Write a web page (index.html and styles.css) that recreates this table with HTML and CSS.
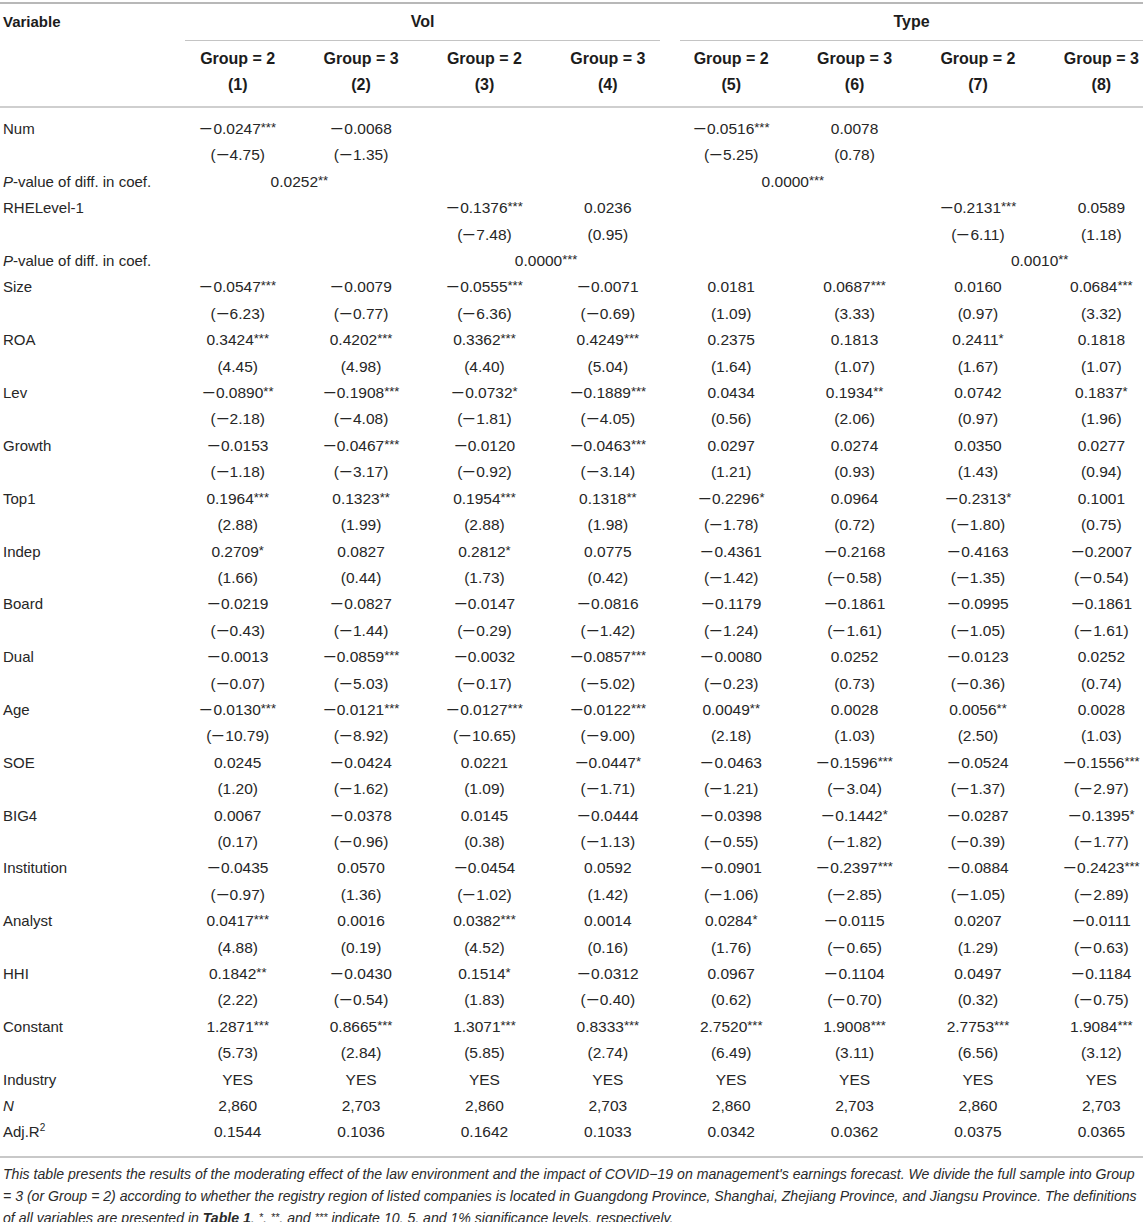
FILE: index.html
```html
<!DOCTYPE html>
<html>
<head>
<meta charset="utf-8">
<link rel="stylesheet" href="styles.css">
</head>
<body>
<table class="t">
<colgroup>
<col class="c0"><col class="cd"><col class="cd"><col class="cd"><col class="cd"><col class="cd"><col class="cd"><col class="cd"><col class="cd">
</colgroup>
<thead>
<tr class="h1">
<th class="lab">Variable</th>
<th colspan="4" class="grp"><div class="ul ul-vol">Vol</div></th>
<th colspan="4" class="grp"><div class="ul ul-type">Type</div></th>
</tr>
<tr class="h2">
<th></th><th>Group = 2</th><th>Group = 3</th><th>Group = 2</th><th>Group = 3</th><th>Group = 2</th><th>Group = 3</th><th>Group = 2</th><th>Group = 3</th>
</tr>
<tr class="h3">
<th></th><th>(1)</th><th>(2)</th><th>(3)</th><th>(4)</th><th>(5)</th><th>(6)</th><th>(7)</th><th>(8)</th>
</tr>
</thead>
<tbody>
<tr class="first"><td>Num</td><td><span class="m">−</span>0.0247<sup>***</sup></td><td><span class="m">−</span>0.0068</td><td></td><td></td><td><span class="m">−</span>0.0516<sup>***</sup></td><td>0.0078</td><td></td><td></td></tr>
<tr><td></td><td>(<span class="m">−</span>4.75)</td><td>(<span class="m">−</span>1.35)</td><td></td><td></td><td>(<span class="m">−</span>5.25)</td><td>(0.78)</td><td></td><td></td></tr>
<tr><td><i>P</i>-value of diff. in coef.</td><td colspan="2">0.0252<sup>**</sup></td><td colspan="2"></td><td colspan="2">0.0000<sup>***</sup></td><td colspan="2"></td></tr>
<tr><td>RHELevel-1</td><td></td><td></td><td><span class="m">−</span>0.1376<sup>***</sup></td><td>0.0236</td><td></td><td></td><td><span class="m">−</span>0.2131<sup>***</sup></td><td>0.0589</td></tr>
<tr><td></td><td></td><td></td><td>(<span class="m">−</span>7.48)</td><td>(0.95)</td><td></td><td></td><td>(<span class="m">−</span>6.11)</td><td>(1.18)</td></tr>
<tr><td><i>P</i>-value of diff. in coef.</td><td colspan="2"></td><td colspan="2">0.0000<sup>***</sup></td><td colspan="2"></td><td colspan="2">0.0010<sup>**</sup></td></tr>
<tr><td>Size</td><td><span class="m">−</span>0.0547<sup>***</sup></td><td><span class="m">−</span>0.0079</td><td><span class="m">−</span>0.0555<sup>***</sup></td><td><span class="m">−</span>0.0071</td><td>0.0181</td><td>0.0687<sup>***</sup></td><td>0.0160</td><td>0.0684<sup>***</sup></td></tr>
<tr><td></td><td>(<span class="m">−</span>6.23)</td><td>(<span class="m">−</span>0.77)</td><td>(<span class="m">−</span>6.36)</td><td>(<span class="m">−</span>0.69)</td><td>(1.09)</td><td>(3.33)</td><td>(0.97)</td><td>(3.32)</td></tr>
<tr><td>ROA</td><td>0.3424<sup>***</sup></td><td>0.4202<sup>***</sup></td><td>0.3362<sup>***</sup></td><td>0.4249<sup>***</sup></td><td>0.2375</td><td>0.1813</td><td>0.2411<sup>*</sup></td><td>0.1818</td></tr>
<tr><td></td><td>(4.45)</td><td>(4.98)</td><td>(4.40)</td><td>(5.04)</td><td>(1.64)</td><td>(1.07)</td><td>(1.67)</td><td>(1.07)</td></tr>
<tr><td>Lev</td><td><span class="m">−</span>0.0890<sup>**</sup></td><td><span class="m">−</span>0.1908<sup>***</sup></td><td><span class="m">−</span>0.0732<sup>*</sup></td><td><span class="m">−</span>0.1889<sup>***</sup></td><td>0.0434</td><td>0.1934<sup>**</sup></td><td>0.0742</td><td>0.1837<sup>*</sup></td></tr>
<tr><td></td><td>(<span class="m">−</span>2.18)</td><td>(<span class="m">−</span>4.08)</td><td>(<span class="m">−</span>1.81)</td><td>(<span class="m">−</span>4.05)</td><td>(0.56)</td><td>(2.06)</td><td>(0.97)</td><td>(1.96)</td></tr>
<tr><td>Growth</td><td><span class="m">−</span>0.0153</td><td><span class="m">−</span>0.0467<sup>***</sup></td><td><span class="m">−</span>0.0120</td><td><span class="m">−</span>0.0463<sup>***</sup></td><td>0.0297</td><td>0.0274</td><td>0.0350</td><td>0.0277</td></tr>
<tr><td></td><td>(<span class="m">−</span>1.18)</td><td>(<span class="m">−</span>3.17)</td><td>(<span class="m">−</span>0.92)</td><td>(<span class="m">−</span>3.14)</td><td>(1.21)</td><td>(0.93)</td><td>(1.43)</td><td>(0.94)</td></tr>
<tr><td>Top1</td><td>0.1964<sup>***</sup></td><td>0.1323<sup>**</sup></td><td>0.1954<sup>***</sup></td><td>0.1318<sup>**</sup></td><td><span class="m">−</span>0.2296<sup>*</sup></td><td>0.0964</td><td><span class="m">−</span>0.2313<sup>*</sup></td><td>0.1001</td></tr>
<tr><td></td><td>(2.88)</td><td>(1.99)</td><td>(2.88)</td><td>(1.98)</td><td>(<span class="m">−</span>1.78)</td><td>(0.72)</td><td>(<span class="m">−</span>1.80)</td><td>(0.75)</td></tr>
<tr><td>Indep</td><td>0.2709<sup>*</sup></td><td>0.0827</td><td>0.2812<sup>*</sup></td><td>0.0775</td><td><span class="m">−</span>0.4361</td><td><span class="m">−</span>0.2168</td><td><span class="m">−</span>0.4163</td><td><span class="m">−</span>0.2007</td></tr>
<tr><td></td><td>(1.66)</td><td>(0.44)</td><td>(1.73)</td><td>(0.42)</td><td>(<span class="m">−</span>1.42)</td><td>(<span class="m">−</span>0.58)</td><td>(<span class="m">−</span>1.35)</td><td>(<span class="m">−</span>0.54)</td></tr>
<tr><td>Board</td><td><span class="m">−</span>0.0219</td><td><span class="m">−</span>0.0827</td><td><span class="m">−</span>0.0147</td><td><span class="m">−</span>0.0816</td><td><span class="m">−</span>0.1179</td><td><span class="m">−</span>0.1861</td><td><span class="m">−</span>0.0995</td><td><span class="m">−</span>0.1861</td></tr>
<tr><td></td><td>(<span class="m">−</span>0.43)</td><td>(<span class="m">−</span>1.44)</td><td>(<span class="m">−</span>0.29)</td><td>(<span class="m">−</span>1.42)</td><td>(<span class="m">−</span>1.24)</td><td>(<span class="m">−</span>1.61)</td><td>(<span class="m">−</span>1.05)</td><td>(<span class="m">−</span>1.61)</td></tr>
<tr><td>Dual</td><td><span class="m">−</span>0.0013</td><td><span class="m">−</span>0.0859<sup>***</sup></td><td><span class="m">−</span>0.0032</td><td><span class="m">−</span>0.0857<sup>***</sup></td><td><span class="m">−</span>0.0080</td><td>0.0252</td><td><span class="m">−</span>0.0123</td><td>0.0252</td></tr>
<tr><td></td><td>(<span class="m">−</span>0.07)</td><td>(<span class="m">−</span>5.03)</td><td>(<span class="m">−</span>0.17)</td><td>(<span class="m">−</span>5.02)</td><td>(<span class="m">−</span>0.23)</td><td>(0.73)</td><td>(<span class="m">−</span>0.36)</td><td>(0.74)</td></tr>
<tr><td>Age</td><td><span class="m">−</span>0.0130<sup>***</sup></td><td><span class="m">−</span>0.0121<sup>***</sup></td><td><span class="m">−</span>0.0127<sup>***</sup></td><td><span class="m">−</span>0.0122<sup>***</sup></td><td>0.0049<sup>**</sup></td><td>0.0028</td><td>0.0056<sup>**</sup></td><td>0.0028</td></tr>
<tr><td></td><td>(<span class="m">−</span>10.79)</td><td>(<span class="m">−</span>8.92)</td><td>(<span class="m">−</span>10.65)</td><td>(<span class="m">−</span>9.00)</td><td>(2.18)</td><td>(1.03)</td><td>(2.50)</td><td>(1.03)</td></tr>
<tr><td>SOE</td><td>0.0245</td><td><span class="m">−</span>0.0424</td><td>0.0221</td><td><span class="m">−</span>0.0447<sup>*</sup></td><td><span class="m">−</span>0.0463</td><td><span class="m">−</span>0.1596<sup>***</sup></td><td><span class="m">−</span>0.0524</td><td><span class="m">−</span>0.1556<sup>***</sup></td></tr>
<tr><td></td><td>(1.20)</td><td>(<span class="m">−</span>1.62)</td><td>(1.09)</td><td>(<span class="m">−</span>1.71)</td><td>(<span class="m">−</span>1.21)</td><td>(<span class="m">−</span>3.04)</td><td>(<span class="m">−</span>1.37)</td><td>(<span class="m">−</span>2.97)</td></tr>
<tr><td>BIG4</td><td>0.0067</td><td><span class="m">−</span>0.0378</td><td>0.0145</td><td><span class="m">−</span>0.0444</td><td><span class="m">−</span>0.0398</td><td><span class="m">−</span>0.1442<sup>*</sup></td><td><span class="m">−</span>0.0287</td><td><span class="m">−</span>0.1395<sup>*</sup></td></tr>
<tr><td></td><td>(0.17)</td><td>(<span class="m">−</span>0.96)</td><td>(0.38)</td><td>(<span class="m">−</span>1.13)</td><td>(<span class="m">−</span>0.55)</td><td>(<span class="m">−</span>1.82)</td><td>(<span class="m">−</span>0.39)</td><td>(<span class="m">−</span>1.77)</td></tr>
<tr><td>Institution</td><td><span class="m">−</span>0.0435</td><td>0.0570</td><td><span class="m">−</span>0.0454</td><td>0.0592</td><td><span class="m">−</span>0.0901</td><td><span class="m">−</span>0.2397<sup>***</sup></td><td><span class="m">−</span>0.0884</td><td><span class="m">−</span>0.2423<sup>***</sup></td></tr>
<tr><td></td><td>(<span class="m">−</span>0.97)</td><td>(1.36)</td><td>(<span class="m">−</span>1.02)</td><td>(1.42)</td><td>(<span class="m">−</span>1.06)</td><td>(<span class="m">−</span>2.85)</td><td>(<span class="m">−</span>1.05)</td><td>(<span class="m">−</span>2.89)</td></tr>
<tr><td>Analyst</td><td>0.0417<sup>***</sup></td><td>0.0016</td><td>0.0382<sup>***</sup></td><td>0.0014</td><td>0.0284<sup>*</sup></td><td><span class="m">−</span>0.0115</td><td>0.0207</td><td><span class="m">−</span>0.0111</td></tr>
<tr><td></td><td>(4.88)</td><td>(0.19)</td><td>(4.52)</td><td>(0.16)</td><td>(1.76)</td><td>(<span class="m">−</span>0.65)</td><td>(1.29)</td><td>(<span class="m">−</span>0.63)</td></tr>
<tr><td>HHI</td><td>0.1842<sup>**</sup></td><td><span class="m">−</span>0.0430</td><td>0.1514<sup>*</sup></td><td><span class="m">−</span>0.0312</td><td>0.0967</td><td><span class="m">−</span>0.1104</td><td>0.0497</td><td><span class="m">−</span>0.1184</td></tr>
<tr><td></td><td>(2.22)</td><td>(<span class="m">−</span>0.54)</td><td>(1.83)</td><td>(<span class="m">−</span>0.40)</td><td>(0.62)</td><td>(<span class="m">−</span>0.70)</td><td>(0.32)</td><td>(<span class="m">−</span>0.75)</td></tr>
<tr><td>Constant</td><td>1.2871<sup>***</sup></td><td>0.8665<sup>***</sup></td><td>1.3071<sup>***</sup></td><td>0.8333<sup>***</sup></td><td>2.7520<sup>***</sup></td><td>1.9008<sup>***</sup></td><td>2.7753<sup>***</sup></td><td>1.9084<sup>***</sup></td></tr>
<tr><td></td><td>(5.73)</td><td>(2.84)</td><td>(5.85)</td><td>(2.74)</td><td>(6.49)</td><td>(3.11)</td><td>(6.56)</td><td>(3.12)</td></tr>
<tr><td>Industry</td><td>YES</td><td>YES</td><td>YES</td><td>YES</td><td>YES</td><td>YES</td><td>YES</td><td>YES</td></tr>
<tr><td><i>N</i></td><td>2,860</td><td>2,703</td><td>2,860</td><td>2,703</td><td>2,860</td><td>2,703</td><td>2,860</td><td>2,703</td></tr>
<tr class="last"><td>Adj.R<sup class="sq">2</sup></td><td>0.1544</td><td>0.1036</td><td>0.1642</td><td>0.1033</td><td>0.0342</td><td>0.0362</td><td>0.0375</td><td>0.0365</td></tr>
</tbody>
</table>
<p class="note">This table presents the results of the moderating effect of the law environment and the impact of COVID−19 on management's earnings forecast. We divide the full sample into Group<br>= 3 (or Group = 2) according to whether the registry region of listed companies is located in Guangdong Province, Shanghai, Zhejiang Province, and Jiangsu Province. The definitions<br>of all variables are presented in <b>Table 1</b>. <sup>*</sup>, <sup>**</sup>, and <sup>***</sup> indicate 10, 5, and 1% significance levels, respectively.</p>
</body>
</html>
```
FILE: styles.css
```css
html, body {
  margin: 0;
  padding: 0;
  background: #fff;
}
body {
  font-family: "Liberation Sans", Arial, sans-serif;
  color: #222;
  width: 1143px;
}
.t {
  width: 1143px;
  table-layout: fixed;
  border-collapse: collapse;
  margin-top: 2px;
  border-top: 2px solid #b8b8b8;
  font-size: 15.5px;
}
.c0 { width: 156px; }
.cd { width: 123.375px; }
.t th, .t td {
  padding: 0 0 0 40px;
  text-align: center;
  white-space: nowrap;
}
.t th:first-child, .t td:first-child {
  text-align: left;
  padding-left: 3px;
  font-size: 15px;
}
.t th {
  font-weight: bold;
  font-size: 16px;
  color: #1c1c1c;
}
.h1 th {
  vertical-align: top;
  line-height: 36px;
}
.h1 th.grp {
  padding: 0;
}
.ul {
  height: 36px;
  line-height: 36px;
  border-bottom: 1px solid #c4c4c4;
}
.ul-vol {
  margin-left: 29px;
  margin-right: -10.5px;
}
.ul-type {
  margin-left: 30.5px;
  margin-right: 0;
}
.h2 th {
  line-height: 26px;
  padding-top: 5px;
}
.h3 th {
  line-height: 26px;
  padding-bottom: 8px;
  border-bottom: 2px solid #cfcfcf;
}
.t td {
  line-height: 26.4px;
  color: #262626;
}
.first td {
  padding-top: 8px;
}
.last td {
  padding-bottom: 10px;
  border-bottom: 2px solid #c8c8c8;
}
.m {
  display: inline-block;
  width: 14px;
  text-align: left;
  transform: scaleX(1.45);
  transform-origin: 0 50%;
}
.t sup {
  font-size: 13px;
  line-height: 0;
  vertical-align: 2px;
}
.t sup.sq {
  font-size: 10px;
  vertical-align: 6px;
}
.note {
  margin: 5px 0 0;
  padding: 0 0 0 3px;
  font-size: 14.1px;
  line-height: 22px;
  font-style: italic;
  color: #2a2a2a;
  white-space: nowrap;
}
.note sup {
  font-size: 11px;
  line-height: 0;
  vertical-align: 2px;
}
```
